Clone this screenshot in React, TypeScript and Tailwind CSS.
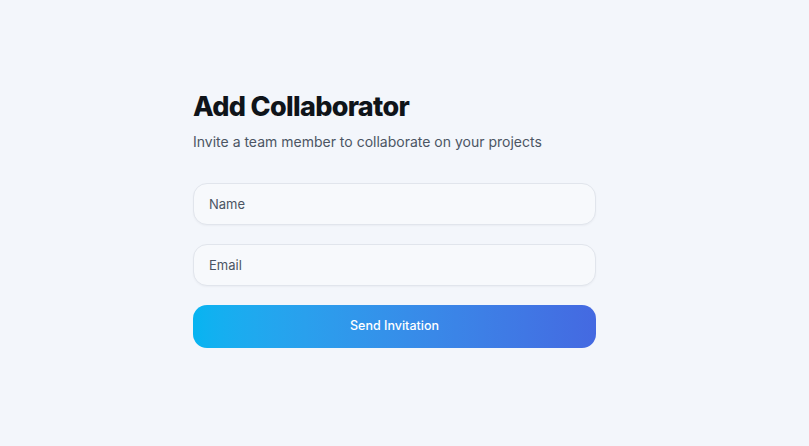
import React from "react";

export default function App() {
    return (
        <div className="min-h-screen w-full bg-[#f3f6fb] font-['Inter',sans-serif]">
            <div className="ml-[193px] w-[403px] pt-[90px]">
                <h1 className="text-[27px] leading-[34px] font-extrabold tracking-[-0.025em] text-[#0f1419]">
                    Add Collaborator
                </h1>
                <p className="mt-[8px] text-[14px] leading-[20px] text-[#4b5563]">
                    Invite a team member to collaborate on your projects
                </p>
                <form className="mt-[31px] flex flex-col gap-[19px]" onSubmit={(e) => e.preventDefault()}>
                    <input
                        type="text"
                        placeholder="Name"
                        className="h-[42px] w-full rounded-[14px] border border-[#e1e5ec] bg-[#f7f9fc] px-[15px] text-[13px] text-[#374151] placeholder:text-[#4b5563] shadow-[0_1px_2px_rgba(15,23,42,0.04)] outline-none"
                    />
                    <input
                        type="email"
                        placeholder="Email"
                        className="h-[42px] w-full rounded-[14px] border border-[#e1e5ec] bg-[#f7f9fc] px-[15px] text-[13px] text-[#374151] placeholder:text-[#4b5563] shadow-[0_1px_2px_rgba(15,23,42,0.04)] outline-none"
                    />
                    <button
                        type="submit"
                        className="h-[43px] w-full rounded-[14px] bg-gradient-to-r from-[#06b4f1] to-[#4469e1] text-[12.5px] font-medium text-white"
                    >
                        Send Invitation
                    </button>
                </form>
            </div>
        </div>
    );
}
